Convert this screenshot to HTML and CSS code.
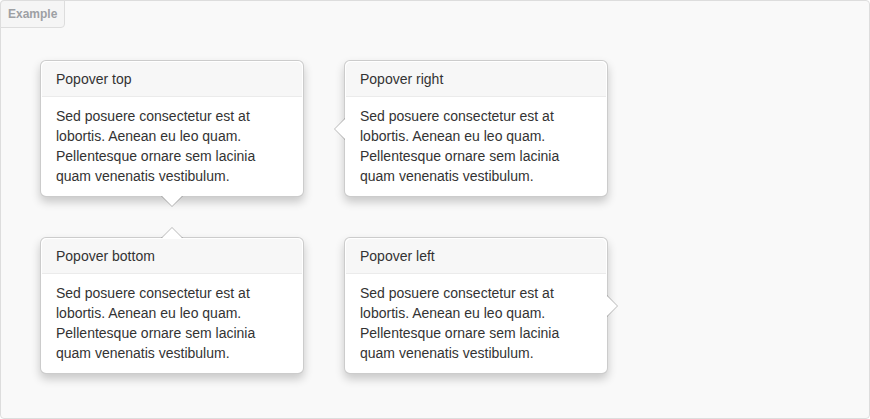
FILE: index.html
```html
<!DOCTYPE html>
<html>
<head>
<meta charset="utf-8">
<link rel="stylesheet" href="styles.css">
</head>
<body>
<div class="example">
  <div class="example-label">Example</div>
  <div class="grid">
    <div class="popover top">
      <div class="arrow"></div>
      <h3 class="popover-title">Popover top</h3>
      <div class="popover-content">Sed posuere consectetur est at lobortis. Aenean eu leo quam. Pellentesque ornare sem lacinia quam venenatis vestibulum.</div>
    </div>
    <div class="popover right">
      <div class="arrow"></div>
      <h3 class="popover-title">Popover right</h3>
      <div class="popover-content">Sed posuere consectetur est at lobortis. Aenean eu leo quam. Pellentesque ornare sem lacinia quam venenatis vestibulum.</div>
    </div>
    <div class="popover bottom">
      <div class="arrow"></div>
      <h3 class="popover-title">Popover bottom</h3>
      <div class="popover-content">Sed posuere consectetur est at lobortis. Aenean eu leo quam. Pellentesque ornare sem lacinia quam venenatis vestibulum.</div>
    </div>
    <div class="popover left">
      <div class="arrow"></div>
      <h3 class="popover-title">Popover left</h3>
      <div class="popover-content">Sed posuere consectetur est at lobortis. Aenean eu leo quam. Pellentesque ornare sem lacinia quam venenatis vestibulum.</div>
    </div>
  </div>
</div>
</body>
</html>
```
FILE: styles.css
```css
* { box-sizing: border-box; }
html, body { margin: 0; padding: 0; background: #fff; }
body {
  font-family: "Liberation Sans", Arial, sans-serif;
  font-size: 14px;
  line-height: 20px;
  color: #333;
}
.example {
  position: relative;
  width: 870px;
  height: 419px;
  background: #f9f9f9;
  border: 1px solid #ddd;
  border-radius: 4px;
  padding: 59px 0 0 39px;
}
.example-label {
  position: absolute;
  top: -1px;
  left: -1px;
  padding: 3px 7px;
  font-size: 12px;
  line-height: 20px;
  font-weight: bold;
  color: #9da0a4;
  background: #f5f5f5;
  border: 1px solid #ddd;
  border-radius: 4px 0 4px 0;
}
.grid {
  display: grid;
  grid-template-columns: 264px 264px;
  column-gap: 40px;
  row-gap: 40px;
}
.popover {
  position: relative;
  width: 264px;
  padding: 1px;
  background: #fff;
  border: 1px solid rgba(0,0,0,.2);
  border-radius: 6px;
  box-shadow: 0 5px 10px rgba(0,0,0,.2);
  white-space: normal;
}
.popover-title {
  margin: 0;
  padding: 8px 14px;
  font-size: 14px;
  font-weight: normal;
  line-height: 18px;
  background: #f7f7f7;
  border-bottom: 1px solid #ebebeb;
  border-radius: 5px 5px 0 0;
}
.popover-content {
  padding: 9px 14px;
}
.arrow, .arrow::after {
  position: absolute;
  display: block;
  width: 0;
  height: 0;
  border: solid transparent;
}
.arrow { border-width: 11px; }
.arrow::after { content: ""; border-width: 10px; }

.popover.top .arrow {
  left: 50%;
  margin-left: -11px;
  bottom: -11px;
  border-bottom-width: 0;
  border-top-color: rgba(0,0,0,.25);
}
.popover.top .arrow::after {
  bottom: 1px;
  margin-left: -10px;
  border-bottom-width: 0;
  border-top-color: #fff;
}
.popover.right .arrow {
  top: 50%;
  left: -11px;
  margin-top: -11px;
  border-left-width: 0;
  border-right-color: rgba(0,0,0,.25);
}
.popover.right .arrow::after {
  left: 1px;
  bottom: -10px;
  border-left-width: 0;
  border-right-color: #fff;
}
.popover.bottom .arrow {
  left: 50%;
  margin-left: -11px;
  top: -11px;
  border-top-width: 0;
  border-bottom-color: rgba(0,0,0,.25);
}
.popover.bottom .arrow::after {
  top: 1px;
  margin-left: -10px;
  border-top-width: 0;
  border-bottom-color: #fff;
}
.popover.left .arrow {
  top: 50%;
  right: -11px;
  margin-top: -11px;
  border-right-width: 0;
  border-left-color: rgba(0,0,0,.25);
}
.popover.left .arrow::after {
  right: 1px;
  bottom: -10px;
  border-right-width: 0;
  border-left-color: #fff;
}
```
